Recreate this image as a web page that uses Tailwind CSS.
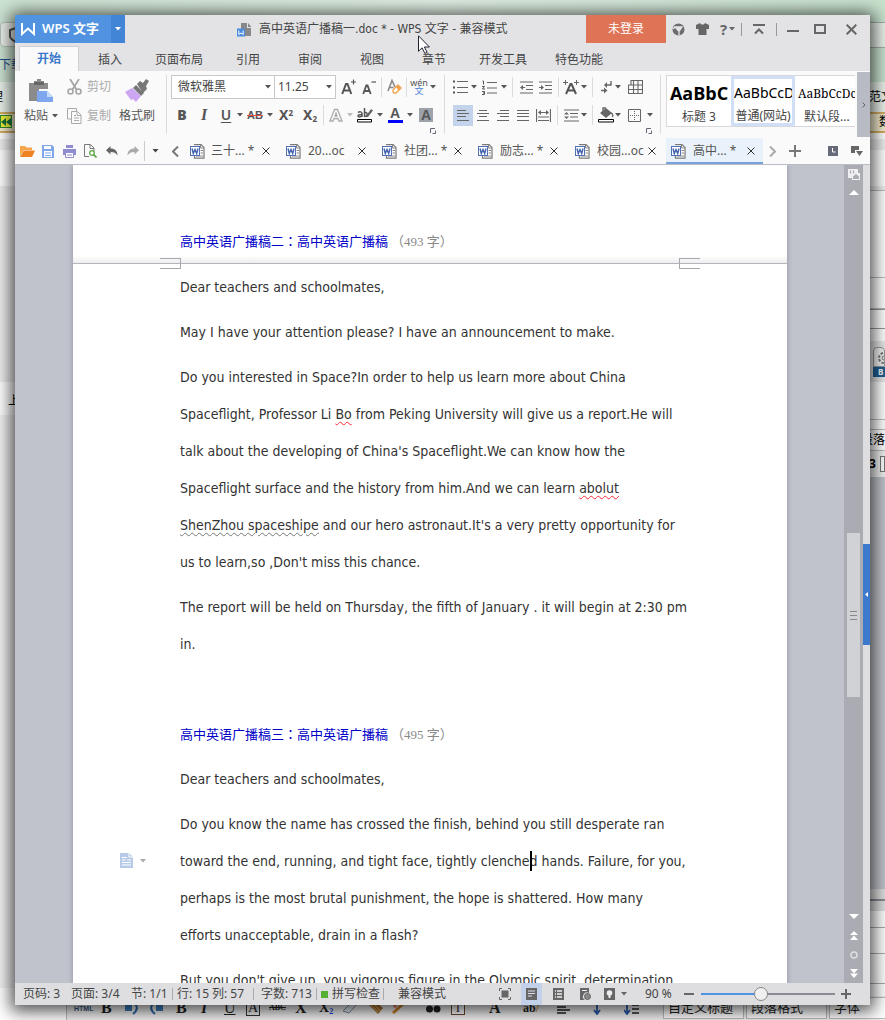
<!DOCTYPE html>
<html lang="zh-CN">
<head>
<meta charset="utf-8">
<title>高中英语广播稿一.doc - WPS 文字</title>
<script src="https://cdn.jsdelivr.net/npm/@tailwindcss/browser@4"></script>
</head>
<body class="h-screen overflow-hidden bg-white font-['Noto_Sans','Noto_Sans_CJK_SC',sans-serif] text-xs text-[#444]">

<svg class="hidden" aria-hidden="true">
  <symbol id="caret" viewBox="0 0 6 4"><path d="M0 0h6L3 3.6z" fill="currentColor"/></symbol>
  <symbol id="doc" viewBox="0 0 15 15"><path d="M4.500 1V.6h6.500l3 3v10.500H4.500V12" fill="#fff" stroke="#7a7a7a" stroke-width="1.200"/><path d="M10.500 1v3h3.500M10.500 6.500H13M10.500 9H13M6 12h7" fill="none" stroke="#888"/><rect x=".5" y="2.500" width="9" height="9" fill="#fff" stroke="#5170b5"/><path d="M2 4.500l1.300 5L5 5.500l1.700 4 1.300-5" fill="none" stroke="#3f61ad" stroke-width="1.400"/></symbol>
  <symbol id="x" viewBox="0 0 8 8"><path d="M.5.5l7 7M7.500.5l-7 7" stroke="#333" fill="none"/></symbol>
  <symbol id="launch" viewBox="0 0 6 6"><path d="M.5 5V.5H5M2.500 5.500h3v-3" fill="none" stroke="#667" stroke-width="1"/></symbol>
</svg>

<div class="relative h-full">
  <!-- Windows behind the editor -->
  <div class="absolute inset-0 overflow-hidden" aria-hidden="true">
    <div class="h-[82px] bg-linear-to-r from-[#cde3d2] via-[#e0eee3] to-[#c8e2ce]"></div>
    <div class="h-[30px] bg-[#e9f1ea]"></div>
    <div class="h-[21px] border-y-2 border-[#d3ae62] bg-[#f4ecd0]"></div>
    <div class="h-[6px] bg-white"></div>
    <div class="h-[11px] bg-[#eee]"></div>
    <div class="absolute left-0 top-[150px] bottom-0 w-[15px]">
      <div class="mt-[36px] h-[196px] bg-[#eee]"></div>
      <div class="mt-[11px] pl-[8px] text-black">上</div>
    </div>
    <div class="absolute left-0 top-[415px] h-[573px] w-[15px] bg-[#f2f2f2]"></div>
    <div class="absolute left-0 top-[22px] flex h-[25px] w-[20px] items-center rounded-sm border border-[#b4c0b6] bg-[#eef2ee] pl-[7px]"><svg class="h-4 w-4 shrink-0" viewBox="0 0 16 16"><path d="M8 1l6 2v6c0 3-4 5-6 6-2-1-6-3-6-6V3z" fill="none" stroke="#555" stroke-width="2"/></svg></div>
    <div class="absolute -left-px top-[57px] whitespace-nowrap text-[#1c4f8c]">下载</div>
    <div class="absolute -left-[9px] top-[89px] text-black">理</div>
    <div class="absolute left-0 top-[115px] flex h-[13px] w-[12px] items-center border border-[#298a36] bg-[#f2f43a]"><svg class="h-[8px] w-[10px]" viewBox="0 0 10 8"><path d="M5 0v8L0 4zM10 0v8L5 4z" fill="#16703a"/></svg></div>

    <div class="absolute right-0 top-[22px] h-[26px] w-[16px] border-y border-[#9fb0a3] bg-[#e9f0ea]"></div>
    <div class="absolute -right-[8px] top-[89px] whitespace-nowrap text-black">范文</div>
    <div class="absolute right-[-6px] top-[114px] whitespace-nowrap text-black">数</div>
    <div class="absolute right-0 top-[150px] w-[16px]">
      <div class="h-[36px] bg-white"></div>
      <div class="h-[4px] bg-[#eee]"></div>
      <div class="h-[88px] border-y border-[#bbb] bg-white"></div>
      <div class="h-[31px] border-b border-[#bbb] bg-white"></div>
      <div class="h-[20px] border-y border-[#999] bg-white"></div>
      <div class="mt-[12px] h-[41px] bg-[#e8e8e8] pt-[6px] pl-[4px]">
        <div class="h-[20px] overflow-hidden rounded-t border border-[#999] bg-[#f2f2f2]"><svg class="h-[18px] w-[18px]" viewBox="0 0 18 18"><circle cx="10" cy="10" r="5" fill="none" stroke="#777" stroke-width="2" stroke-dasharray="2.500 1.400"/><circle cx="10" cy="10" r="2" fill="none" stroke="#777"/></svg></div>
        <div class="h-[10px] bg-[#1f5f92] pl-[5px] text-[8px] leading-[10px] font-bold text-white">B</div>
      </div>
      <div class="mt-[37px] h-[11px] border-y border-[#bbb]"></div>
      <div class="flex h-[20px] justify-end leading-[20px] whitespace-nowrap text-black">段落</div>
      <div class="flex h-[27px] items-center gap-1 border-t border-[#bbb] bg-[#f0f0f0] font-bold text-black">3<span class="h-4 w-4 border border-[#777] bg-white"></span></div>
      <div class="h-[412px] bg-[#c0c3cc]"></div>
      <div class="h-[22px] bg-[#dedee0] pt-[10px]"><div class="h-[2px] bg-[#8a8a92]"></div></div>
      <div class="h-[17px] border-b border-[#aaa] bg-white"></div>
      <div class="h-[26px] border-b border-[#aaa] bg-white"></div>
      <div class="h-[30px] border-b border-[#aaa] bg-white"></div>
    </div>
    <div class="absolute inset-x-0 bottom-0 ml-[66px] flex h-[24px] items-center border-l border-[#bbb] bg-[#f1f1f1] pl-[7px] font-['Liberation_Serif','Noto_Sans_CJK_SC',serif] text-base leading-none text-[#222]">
      <span class="w-[27px] shrink-0 font-['Liberation_Sans',sans-serif] text-[7px] font-bold text-[#345a86]">HTML</span>
      <b class="w-[24px] shrink-0">B</b>
      <svg class="mr-[12px] h-[13px] w-[13px] shrink-0" viewBox="0 0 13 13"><path d="M0 3h7v6H0z" fill="#3f7fc0"/><path d="M9 1c4 3 4 7-1 11" fill="none" stroke="#2b6cb0" stroke-width="2"/></svg>
      <svg class="mr-[13px] h-[13px] w-[13px] shrink-0" viewBox="0 0 13 13"><path d="M6 3h7v6H6z" fill="#3f7fc0"/><path d="M4 1c-4 3-4 7 1 11" fill="none" stroke="#2b6cb0" stroke-width="2"/></svg>
      <b class="w-[25px] shrink-0">B</b><i class="w-[23px] shrink-0 font-bold">I</i><u class="w-[22px] shrink-0">U</u><span class="mr-[9px] w-[14px] shrink-0 border border-[#333] text-center text-sm leading-none">A</span>
      <s class="w-[26px] shrink-0 text-[8px] font-bold">ABC</s><b class="w-[24px] shrink-0">X</b><b class="w-[24px] shrink-0 text-sm">X<sub class="text-[8px] text-blue-700">2</sub></b>
      <svg class="mr-[10px] h-[12px] w-[15px] shrink-0" viewBox="0 0 15 12"><path d="M0 9l9-9 5 2-8 9z" fill="#e4eaf2" stroke="#7d8ca3"/></svg>
      <svg class="mr-[9px] h-[12px] w-[15px] shrink-0" viewBox="0 0 15 12"><path d="M0 2l8-2 7 6-5 6z" fill="#a8722f"/><path d="M3 3l7 7M6 2l6 7" stroke="#e2b36a"/></svg>
      <svg class="mr-[20px] h-[12px] w-[14px] shrink-0" viewBox="0 0 14 12"><path d="M1 11L12 1" stroke="#d0852c" stroke-width="3"/><path d="M3 2v4M1 4h4" stroke="#e05a30"/></svg>
      <svg class="mr-[10px] h-[10px] w-[15px] shrink-0" viewBox="0 0 15 10"><circle cx="3.500" cy="6" r="3.500" fill="#222"/><circle cx="11" cy="6" r="3.500" fill="#222"/></svg>
      <span class="mr-[24px] w-[14px] shrink-0 border border-[#6a4a30] bg-white text-center text-xs leading-none">T</span>
      <b class="w-[34px] shrink-0">A</b><span class="w-[34px] shrink-0 text-xs font-bold">ab<span class="text-[#c98324]">/</span></span>
      <svg class="mr-[22px] h-[11px] w-[13px] shrink-0" viewBox="0 0 13 11"><path d="M0 1h13M0 4h9M0 7h13M0 10h9" stroke="#222" stroke-width="1.500"/></svg>
      <svg class="mr-[22px] h-[13px] w-[10px] shrink-0" viewBox="0 0 10 13"><path d="M0 1h10M5 2v9M2 8l3 4 3-4" fill="none" stroke="#2b5cb0" stroke-width="1.800"/></svg>
      <svg class="mr-[24px] h-[13px] w-[15px] shrink-0" viewBox="0 0 15 13"><path d="M3 1v10M0 8l3 4 3-4" fill="none" stroke="#2b5cb0" stroke-width="1.800"/><path d="M8 3h7M8 7h7M8 11h7" stroke="#222" stroke-width="1.500"/></svg>
      <div class="ml-auto flex shrink-0 gap-[2px] text-[13px] leading-5 whitespace-nowrap">
        <span class="w-[81px] border border-[#bbb] bg-white pl-1">自定义标题</span>
        <span class="w-[81px] border border-[#bbb] bg-white pl-1">段落格式</span>
        <span class="w-[66px] border border-r-0 border-[#bbb] bg-white pl-1">字体</span>
      </div>
    </div>
  </div>

  <div class="relative h-full p-[15px]">
  <div class="flex h-full flex-col bg-[#e3e3e6] shadow-[0_2px_16px_4px_rgba(0,0,0,0.7)]">

    <!-- Title bar -->
    <header class="flex h-[28px] shrink-0 items-center">
      <button class="flex h-full w-[96px] items-center gap-[7px] bg-[#5193e1] pl-[6px] text-[13px] font-semibold whitespace-nowrap text-white">
        <svg class="h-[14px] w-[14px] shrink-0" viewBox="0 0 14 14"><path d="M1 1v11l6-5.500 6 5.500V1" fill="none" stroke="#fff" stroke-width="2"/></svg>WPS 文字</button>
      <button class="flex h-full w-[14px] items-center justify-center bg-[#4284d6] text-white" aria-label="应用菜单"><svg class="h-[4px] w-[6px]"><use href="#caret"/></svg></button>
      <h1 class="ml-[112px] flex items-center gap-[7px] font-['DejaVu_Sans_Condensed','Noto_Sans_CJK_SC',sans-serif] whitespace-nowrap text-[#444]">
        <svg class="h-[15px] w-[15px]" viewBox="0 0 15 15"><path d="M4 1h6v5h4v8H4z" fill="#888"/><path d="M11 1l3.500 4H11z" fill="#888"/><rect y="6.500" width="8" height="8" fill="#4a8be0"/><path d="M1.800 8.500v4L4 11l2.200 1.500v-4" fill="none" stroke="#fff"/></svg>
        高中英语广播稿一.doc * - WPS 文字 - 兼容模式</h1>
      <div class="ml-auto flex h-full items-center text-[#666]">
        <button class="h-full w-[80px] bg-[#df7356] text-white">未登录</button>
        <button class="flex w-[24px] justify-center" aria-label="皮肤中心"><svg class="h-[13px] w-[13px]" viewBox="0 0 13 13"><circle cx="6.500" cy="6.500" r="6" fill="#6c6c6c"/><path d="M3 4h7L7 8.500zM7 8v4.500M3 4L1 6" fill="#e3e3e6" stroke="#e3e3e6" stroke-width="1.300"/></svg></button>
        <button class="flex w-[24px] justify-center" aria-label="换肤"><svg class="h-[12px] w-[13px]" viewBox="0 0 13 12"><path d="M0 2l4-2c1 2 4 2 5 0l4 2v4h-2.500v6h-8V6H0z" fill="#666"/></svg></button>
        <button class="flex w-[27px] items-center justify-center gap-[2px]" aria-label="帮助"><b class="text-[15px] leading-none">?</b><svg class="h-[4px] w-[6px]"><use href="#caret"/></svg></button>
        <span class="h-[13px] w-px bg-[#999]"></span>
        <button class="flex w-[34px] justify-center" aria-label="收起功能区"><svg class="h-[11px] w-[12px]" viewBox="0 0 12 11"><path d="M0 1h12M2 9.500l4-4 4 4" fill="none" stroke="#666" stroke-width="2"/></svg></button>
        <span class="h-[13px] w-px bg-[#999]"></span>
        <button class="flex w-[32px] justify-center" aria-label="最小化"><svg class="h-[11px] w-[12px]" viewBox="0 0 12 11"><path d="M0 7h12" stroke="#666" stroke-width="2"/></svg></button>
        <button class="flex w-[22px] justify-center" aria-label="最大化"><svg class="h-[10px] w-[12px]" viewBox="0 0 12 10"><path d="M1 1h10v8H1z" fill="none" stroke="#666" stroke-width="2"/></svg></button>
        <button class="flex w-[39px] justify-center pl-px" aria-label="关闭"><svg class="h-[11px] w-[11px]" viewBox="0 0 11 11"><path d="M.7.7l9.600 9.600M10.300.7L.7 10.300" stroke="#666" stroke-width="2"/></svg></button>
      </div>
    </header>

    <!-- Ribbon tabs -->
    <nav class="flex h-[28px] shrink-0 items-end pl-[4px]">
      <a href="#" class="flex h-[25px] w-[60px] items-center justify-center border border-b-0 border-[#d0d0d4] bg-[#fafafa] font-bold text-[#3a78cc]">开始</a>
      <a href="#" class="w-[62px] pb-[3px] text-center">插入</a>
      <a href="#" class="w-[76px] pb-[3px] text-center">页面布局</a>
      <a href="#" class="w-[62px] pb-[3px] text-center">引用</a>
      <a href="#" class="w-[62px] pb-[3px] text-center">审阅</a>
      <a href="#" class="w-[62px] pb-[3px] text-center">视图</a>
      <a href="#" class="w-[62px] pb-[3px] text-center">章节</a>
      <a href="#" class="w-[76px] pb-[3px] text-center">开发工具</a>
      <a href="#" class="w-[76px] pb-[3px] text-center">特色功能</a>
    </nav>

    <!-- Ribbon -->
    <section class="flex h-[66px] shrink-0 bg-[#fafafa] text-[#555]">
      <div class="flex w-[151px] shrink-0 pt-[5px]">
        <button class="flex w-[52px] flex-col items-center gap-[4px] pt-[3px]"><svg class="h-[24px] w-[24px]" viewBox="0 0 24 24"><path d="M0 4h5V2h3V0h4v2h3v2h4v6h-9v12H0z" fill="#8b8b8b"/><path d="M5 3h10v3H5z" fill="#666"/><path d="M8 12h10l6 6v5H8z" fill="#7ea7ee"/><path d="M18 12v6h6z" fill="#c6daf9"/></svg><span class="flex items-center gap-1 leading-[18px]">粘贴<svg class="h-[4px] w-[6px]"><use href="#caret"/></svg></span></button>
        <div class="flex flex-col gap-[7px] text-[#aaa]">
          <button class="flex h-[22px] items-center gap-[5px]"><svg class="h-[16px] w-[15px]" viewBox="0 0 15 16"><path d="M3 0l6.500 10.500M12 0L5.500 10.500" stroke="#a5a5a5" stroke-width="1.800"/><circle cx="3.500" cy="12.500" r="2.500" fill="none" stroke="#a5a5a5" stroke-width="1.600"/><circle cx="11.500" cy="12.500" r="2.500" fill="none" stroke="#a5a5a5" stroke-width="1.600"/></svg>剪切</button>
          <button class="flex h-[22px] items-center gap-[5px]"><svg class="h-[16px] w-[15px]" viewBox="0 0 15 16"><path d="M4 11H.5V.5h9V3M4.500 3.500h6l3.500 3.500v8.500H4.500zM10 4v3.500h4M7 7.500h2M7 10h5M7 12.500h5" fill="none" stroke="#aaa"/></svg>复制</button>
        </div>
        <button class="flex w-[52px] flex-col items-center gap-[4px] pt-[2px]"><svg class="h-[25px] w-[24px]" viewBox="0 0 24 25"><path d="M12 6l3-3 3 2 3-4 3 2-3 5 1 3-4 4z" fill="#777"/><path d="M11 7l8 8-3 3-8-8z" fill="#777"/><path d="M7 10l9 8-5 6-3-3-2 1-6-8z" fill="#cda6f3"/></svg><span class="leading-[18px]">格式刷</span></button>
      </div>
      <div class="mt-[4px] h-[59px] w-px shrink-0 bg-[#dcdcdf]"></div>

      <!-- Font -->
      <div class="w-[277px] shrink-0 pt-[4px] pl-[4px]">
        <div class="flex h-[24px] items-center">
          <div class="flex h-[24px] w-[165px] items-center border border-[#c8c8cc] bg-white">
            <label class="relative flex h-full w-[103px] items-center border-r border-[#c8c8cc]"><span class="sr-only">字体</span><select class="w-full appearance-none pl-[6px] text-[#444]"><option>微软雅黑</option></select><svg class="pointer-events-none absolute right-[3px] h-[4px] w-[6px]"><use href="#caret"/></svg></label>
            <label class="relative flex h-full flex-1 items-center"><span class="sr-only">字号</span><select class="w-full appearance-none pl-[3px] text-xs text-[#444]"><option>11.25</option></select><svg class="pointer-events-none absolute right-[3px] h-[4px] w-[6px]"><use href="#caret"/></svg></label>
          </div>
          <button class="flex w-[24px] justify-center" aria-label="增大字号"><svg class="h-[16px] w-[15px]" viewBox="0 0 15 16"><path d="M1.200 15L5 5h1.500l3.800 10M3 11.500h5.500" fill="none" stroke="#555" stroke-width="2"/><path d="M10 3h5M12.500.5v5" stroke="#555" stroke-width="1.200"/></svg></button>
          <button class="flex w-[18px] justify-center" aria-label="减小字号"><svg class="h-[16px] w-[14px]" viewBox="0 0 14 16"><path d="M1.200 15L4.300 6.500h1.200L8.700 15M3 12h4" fill="none" stroke="#555" stroke-width="1.800"/><path d="M9.500 3H14" stroke="#555" stroke-width="1.200"/></svg></button>
          <span class="flex h-[20px] w-[6px] justify-center"><i class="w-px bg-[#dcdcdf]"></i></span>
          <button class="flex w-[20px] justify-center" aria-label="清除格式"><svg class="h-[16px] w-[15px]" viewBox="0 0 15 16"><path d="M1 12L5 1.500 8 8M2.500 8.500h4" fill="none" stroke="#8a8a8a" stroke-width="1.600"/><path d="M6 11l5-5 3 3-5 5H7l-1-1z" fill="#fff" stroke="#f0a24a" stroke-width="1.300"/><path d="M9 8l2-2 3 3-2.500 2.500z" fill="#f0a24a"/></svg></button>
          <span class="flex h-[20px] w-[4px] justify-center"><i class="w-px bg-[#dcdcdf]"></i></span>
          <button class="w-[22px] text-center text-[9px] leading-[8px]" aria-label="拼音指南">wén<br><span class="text-[#4a86d8]">文</span></button>
          <svg class="h-[4px] w-[6px]"><use href="#caret"/></svg>
        </div>
        <div class="mt-[5px] flex h-[22px] items-center font-['Liberation_Sans',sans-serif]">
          <button class="w-[22px] font-['Noto_Sans'] text-[14px] font-black" aria-label="加粗">B</button>
          <button class="w-[22px] font-['Liberation_Serif'] text-[16px] font-bold italic" aria-label="倾斜">I</button>
          <button class="w-[22px] font-['Noto_Sans'] text-[14px] font-semibold underline underline-offset-2" aria-label="下划线">U</button>
          <svg class="h-[4px] w-[6px]"><use href="#caret"/></svg>
          <button class="w-[24px] text-[11px] font-bold" aria-label="删除线"><s class="decoration-[#e84a4a]">AB</s></button>
          <svg class="h-[4px] w-[6px]"><use href="#caret"/></svg>
          <button class="w-[26px] font-['Noto_Sans'] text-[14px] leading-none font-bold" aria-label="上标">X<sup class="text-[8px]">2</sup></button>
          <button class="w-[22px] font-['Noto_Sans'] text-[14px] leading-none font-bold" aria-label="下标">X<sub class="text-[8px]">2</sub></button>
          <span class="flex h-[20px] w-[4px] justify-center"><i class="w-px bg-[#dcdcdf]"></i></span>
          <button class="flex w-[22px] justify-center" aria-label="文字效果"><svg class="h-[15px] w-[14px]" viewBox="0 0 14 15"><path d="M1 13L5.500 1.500h3L13 13h-3l-1-2.500H5L4 13zM6 8h2L7 5z" fill="#fff" stroke="#aaa" stroke-width="1.300"/></svg></button>
          <svg class="h-[4px] w-[6px] text-[#bbb]"><use href="#caret"/></svg>
          <button class="flex w-[24px] justify-center" aria-label="突出显示"><svg class="h-[16px] w-[16px]" viewBox="0 0 16 16"><path d="M1 5.500c2-1.500 4-.5 4 1V10M5 7.500c-3 0-4 .5-4 1.500s3 1.500 4-.5M7.500 1v9M7.500 6c3-2 4 3.500 0 3.500" fill="none" stroke="#555" stroke-width="1.500"/><path d="M9 9l5-7 2 1.500L11 10H8z" fill="#666"/><path d="M.5 12.500h14v2.500H.5z" fill="#fff" stroke="#000"/></svg></button>
          <svg class="h-[4px] w-[6px]"><use href="#caret"/></svg>
          <button class="flex w-[24px] justify-center" aria-label="字体颜色"><span class="w-[15px] border-b-[3px] border-[#00f] text-[14px] leading-[13px] font-bold">A</span></button>
          <svg class="h-[4px] w-[6px]"><use href="#caret"/></svg>
          <button class="flex w-[26px] justify-center" aria-label="字符底纹"><span class="h-[14px] w-[14px] bg-[#9ea3ab] text-[14px] leading-[14px] font-bold">A</span></button>
        </div>
        <div class="flex justify-end pt-[2px] pr-[8px]"><svg class="h-[6px] w-[6px]"><use href="#launch"/></svg></div>
      </div>
      <div class="mt-[4px] h-[59px] w-px shrink-0 bg-[#dcdcdf]"></div>

      <!-- Paragraph -->
      <div class="w-[215px] shrink-0 pt-[4px] pl-[4px]">
        <div class="flex h-[24px] items-center">
          <button class="flex w-[22px] justify-center" aria-label="项目符号"><svg class="h-[14px] w-[15px]" viewBox="0 0 15 14"><path d="M4 1.500h11M4 7.500h11M4 12.500h11" stroke="#666" stroke-width="1.200"/><path d="M0 .5h2v2H0zM0 6.500h2v2H0zM0 11.500h2v2H0z" fill="#555"/></svg></button>
          <svg class="h-[4px] w-[6px]"><use href="#caret"/></svg>
          <button class="flex w-[24px] justify-center" aria-label="编号"><svg class="h-[15px] w-[15px]" viewBox="0 0 15 15"><path d="M5 2.500h10M5 8h10M5 13h10" stroke="#666" stroke-width="1.200"/><path d="M.5 1h1v3.500M0 6.500h2.500L.5 9h2.500M0 11.500h2.500v3H0M1 13h1.500" fill="none" stroke="#555"/></svg></button>
          <svg class="h-[4px] w-[6px]"><use href="#caret"/></svg>
          <span class="flex h-[20px] w-[10px] justify-center"><i class="w-px bg-[#dcdcdf]"></i></span>
          <button class="flex w-[18px] justify-center" aria-label="减少缩进"><svg class="h-[13px] w-[13px]" viewBox="0 0 13 13"><path d="M0 1h13M6 4.500h7M6 8.500h7M0 12h13M1 6.500h4" stroke="#666" stroke-width="1.200"/><path d="M3 4L0 6.500 3 9z" fill="#666"/></svg></button>
          <button class="flex w-[20px] justify-center" aria-label="增加缩进"><svg class="h-[13px] w-[13px]" viewBox="0 0 13 13"><path d="M0 1h13M6 4.500h7M6 8.500h7M0 12h13M0 6.500h4" stroke="#666" stroke-width="1.200"/><path d="M2 4l3 2.500L2 9z" fill="#666"/></svg></button>
          <span class="flex h-[20px] w-[6px] justify-center"><i class="w-px bg-[#dcdcdf]"></i></span>
          <button class="flex w-[20px] justify-center" aria-label="中文版式"><svg class="h-[15px] w-[16px]" viewBox="0 0 16 15"><path d="M3 14L7.500 4h1L13 14M5 10.500h6" fill="none" stroke="#555" stroke-width="2"/><path d="M0 2.500h5M2.500 0v5M11 2.500h5M13.500 0v5" stroke="#666"/></svg></button>
          <svg class="h-[4px] w-[6px]"><use href="#caret"/></svg>
          <span class="flex h-[20px] w-[10px] justify-center"><i class="w-px bg-[#dcdcdf]"></i></span>
          <button class="flex w-[18px] justify-center" aria-label="显示段落标记"><svg class="h-[13px] w-[11px]" viewBox="0 0 11 13"><path d="M10 0v4H5M0 9.500h4" fill="none" stroke="#666" stroke-width="1.400"/><path d="M6 1v6L3 4zM3 6.500v6l3.500-3z" fill="#666"/></svg></button>
          <svg class="h-[4px] w-[6px]"><use href="#caret"/></svg>
          <button class="flex w-[28px] justify-center" aria-label="插入表格"><svg class="h-[14px] w-[15px]" viewBox="0 0 15 14"><path d="M3 .5h11.500v13H.5V5H14M1 9.500h14M5.500 0v14M10 0v14M3 0v5" fill="none" stroke="#666" stroke-width="1.100"/></svg></button>
        </div>
        <div class="mt-[5px] flex h-[22px] items-center pl-[4px]">
          <button class="flex h-[21px] w-[20px] items-center justify-center bg-[#c4d3ec]" aria-label="左对齐"><svg class="h-[13px] w-[12px]" viewBox="0 0 12 13"><path d="M0 1.500h9M0 4.500h12M0 7.500h9M0 11.500h12" stroke="#666" stroke-width="1.200"/></svg></button>
          <button class="flex w-[20px] justify-center" aria-label="居中"><svg class="h-[13px] w-[12px]" viewBox="0 0 12 13"><path d="M2 1.500h8M0 4.500h12M2 7.500h8M0 11.500h12" stroke="#666" stroke-width="1.200"/></svg></button>
          <button class="flex w-[20px] justify-center" aria-label="右对齐"><svg class="h-[13px] w-[12px]" viewBox="0 0 12 13"><path d="M3 1.500h9M0 4.500h12M3 7.500h9M0 11.500h12" stroke="#666" stroke-width="1.200"/></svg></button>
          <button class="flex w-[20px] justify-center" aria-label="两端对齐"><svg class="h-[13px] w-[12px]" viewBox="0 0 12 13"><path d="M0 1.500h12M0 4.500h12M0 7.500h12M0 11.500h12" stroke="#666" stroke-width="1.200"/></svg></button>
          <button class="flex w-[20px] justify-center" aria-label="分散对齐"><svg class="h-[13px] w-[15px]" viewBox="0 0 15 13"><path d="M.5 0v13M14.500 0v13M3 3.500h9M2 8h11M2 11.500h11" stroke="#666" stroke-width="1.200"/><path d="M5 1L2 3.500 5 6zM10 1l3 2.500L10 6z" fill="#666"/></svg></button>
          <span class="flex h-[20px] w-[8px] justify-center"><i class="w-px bg-[#dcdcdf]"></i></span>
          <button class="flex w-[20px] justify-center" aria-label="行距"><svg class="h-[13px] w-[15px]" viewBox="0 0 15 13"><path d="M0 1h15M6 4.500h8M6 8h8M0 12h15" stroke="#666" stroke-width="1.200"/><path d="M0 5.500L2.500 3 5 5.500zM0 7.500L2.500 10 5 7.500z" fill="#666"/></svg></button>
          <svg class="h-[4px] w-[6px]"><use href="#caret"/></svg>
          <span class="flex h-[20px] w-[10px] justify-center"><i class="w-px bg-[#dcdcdf]"></i></span>
          <button class="flex w-[18px] justify-center" aria-label="底纹颜色"><svg class="h-[16px] w-[16px]" viewBox="0 0 16 16"><path d="M2 6l6-5 6 5-6 5z" fill="#666"/><path d="M5 6V1h3M12 6c3 0 3 2 2.500 4" fill="none" stroke="#666" stroke-width="1.400"/><path d="M.5 12.500h15v2.500H.5z" fill="#fff" stroke="#000"/></svg></button>
          <svg class="h-[4px] w-[6px]"><use href="#caret"/></svg>
          <button class="flex w-[26px] justify-center" aria-label="边框"><svg class="h-[13px] w-[13px]" viewBox="0 0 13 13"><path d="M.5.500h12v12H.5z" fill="none" stroke="#666"/><path d="M6.500 2v9M2 6.500h9" stroke="#666" stroke-dasharray="1 1"/></svg></button>
          <svg class="h-[4px] w-[6px]"><use href="#caret"/></svg>
        </div>
        <div class="flex justify-end pt-[2px] pr-[8px]"><svg class="h-[6px] w-[6px]"><use href="#launch"/></svg></div>
      </div>
      <div class="mt-[4px] h-[59px] w-px shrink-0 bg-[#dcdcdf]"></div>

      <!-- Styles gallery -->
      <div class="mt-[4px] ml-[5px] flex h-[52px] min-w-0 flex-1 overflow-hidden border border-r-0 border-[#d8d8dc] bg-white whitespace-nowrap text-[#444]">
        <button class="w-[64px] shrink-0 overflow-hidden"><span class="block h-[31px] font-['Open_Sans'] text-[18px] leading-[33px] font-bold text-black">AaBbC</span><span class="block leading-[18px]">标题 3</span></button>
        <button class="w-[64px] shrink-0 overflow-hidden border-[3px] border-[#d0dff5]"><span class="block h-[28px] text-left text-[14px] leading-[27px] text-black">AaBbCcD</span><span class="block leading-[18px]">普通(网站)</span></button>
        <button class="w-[64px] shrink-0 overflow-hidden pl-[3px] text-left"><span class="block h-[31px] font-['Noto_Serif','DejaVu_Serif',serif] text-[12px] leading-[33px] text-black">AaBbCcDc</span><span class="block pl-[6px] leading-[18px]">默认段...</span></button>
      </div>
      <button class="mt-px ml-[2px] flex w-[13px] shrink-0 items-center justify-center bg-[#b8bac4]" aria-label="更多"><svg class="h-[6px] w-[4px]" viewBox="0 0 4 6"><path d="M.5.500L3 3 .5 5.500" fill="none" stroke="#666"/></svg></button>
    </section>

    <!-- Quick access and document tabs -->
    <section class="flex h-[28px] shrink-0 items-center border-b border-[#b9bbc6] bg-[#fafafa] pt-px pl-[2px]">
      <button class="flex w-[20px] justify-center" aria-label="打开"><svg class="h-[12px] w-[15px]" viewBox="0 0 15 12"><path d="M0 11V1h5l1.500 1.500H12V5H4z" fill="#f5a54c"/><path d="M4 5.500h11L12 12H0z" fill="#f08122"/></svg></button>
      <button class="flex w-[22px] justify-center" aria-label="保存"><svg class="h-[13px] w-[12px]" viewBox="0 0 12 13"><path d="M0 0h10l2 2v11H0z" fill="#7fa5ea"/><path d="M2 1h7v3H2zM2 6h8v6H2z" fill="#fff"/><path d="M3 8h6M3 10.500h6" stroke="#7fa5ea"/></svg></button>
      <button class="flex w-[20px] justify-center" aria-label="打印"><svg class="h-[13px] w-[13px]" viewBox="0 0 13 13"><path d="M3 0h7v3H3zM0 4h13v6H0z" fill="#8f8cd0"/><path d="M2.500 7.500h8v5h-8z" fill="#fff" stroke="#8f8cd0"/><path d="M4 10h5" stroke="#8f8cd0"/></svg></button>
      <button class="flex w-[22px] justify-center" aria-label="打印预览"><svg class="h-[14px] w-[13px]" viewBox="0 0 13 14"><path d="M5 12.500H.5V.5h6L10 4v3M6 1v3.500h4" fill="none" stroke="#777"/><circle cx="8" cy="9" r="2.300" fill="#fff" stroke="#5aa545" stroke-width="1.300"/><path d="M9.500 10.500L12.500 13.500" stroke="#5aa545" stroke-width="1.600"/></svg></button>
      <button class="flex w-[21px] justify-center" aria-label="撤销"><svg class="h-[10px] w-[12px]" viewBox="0 0 12 10"><path d="M4.500 0v2.500C9 2.500 11.500 5 11.500 9.500 10 7 8 6 4.500 6v2.500L0 4.200z" fill="#666"/></svg></button>
      <button class="flex w-[21px] justify-center" aria-label="恢复"><svg class="h-[10px] w-[12px]" viewBox="0 0 12 10"><path d="M7.500 0v2.500C3 2.500.5 5 .5 9.500 2 7 4 6 7.500 6v2.500L12 4.200z" fill="#aaa"/></svg></button>
      <span class="ml-px h-[20px] w-px bg-[#ccc]"></span>
      <button class="flex w-[20px] justify-center text-[#444]" aria-label="自定义快速访问"><svg class="h-[4px] w-[7px]"><use href="#caret"/></svg></button>
      <button class="flex w-[20px] justify-center" aria-label="上一个标签"><svg class="h-[11px] w-[7px]" viewBox="0 0 7 11"><path d="M6 .5l-5 5 5 5" fill="none" stroke="#777" stroke-width="2"/></svg></button>
      <div class="flex h-full text-[#555]">
        <div class="flex w-[97px] items-center pl-[5px]"><svg class="h-[15px] w-[15px]"><use href="#doc"/></svg><a href="#" class="ml-[6px] flex-1 whitespace-nowrap">三十... *</a><button class="mr-[12px]" aria-label="关闭标签"><svg class="h-[8px] w-[8px]"><use href="#x"/></svg></button></div>
        <div class="flex w-[96px] items-center pl-[4px]"><svg class="h-[15px] w-[15px]"><use href="#doc"/></svg><a href="#" class="ml-[7px] flex-1 whitespace-nowrap">20...oc</a><button class="mr-[12px]" aria-label="关闭标签"><svg class="h-[8px] w-[8px]"><use href="#x"/></svg></button></div>
        <div class="flex w-[96px] items-center pl-[4px]"><svg class="h-[15px] w-[15px]"><use href="#doc"/></svg><a href="#" class="ml-[7px] flex-1 whitespace-nowrap">社团... *</a><button class="mr-[12px]" aria-label="关闭标签"><svg class="h-[8px] w-[8px]"><use href="#x"/></svg></button></div>
        <div class="flex w-[96px] items-center pl-[4px]"><svg class="h-[15px] w-[15px]"><use href="#doc"/></svg><a href="#" class="ml-[7px] flex-1 whitespace-nowrap">励志... *</a><button class="mr-[12px]" aria-label="关闭标签"><svg class="h-[8px] w-[8px]"><use href="#x"/></svg></button></div>
        <div class="flex w-[96px] items-center pl-[5px]"><svg class="h-[15px] w-[15px]"><use href="#doc"/></svg><a href="#" class="ml-[7px] flex-1 whitespace-nowrap">校园...oc</a><button class="mr-[10px]" aria-label="关闭标签"><svg class="h-[8px] w-[8px]"><use href="#x"/></svg></button></div>
        <div class="flex w-[97px] items-center bg-[#e9f2fb] pl-[5px] shadow-[inset_0_-2px_0_#78a3d9]"><svg class="h-[15px] w-[15px]"><use href="#doc"/></svg><a href="#" class="ml-[7px] flex-1 whitespace-nowrap">高中... *</a><button class="mr-[8px]" aria-label="关闭标签"><svg class="h-[8px] w-[8px]"><use href="#x"/></svg></button></div>
      </div>
      <button class="flex w-[18px] justify-center" aria-label="下一个标签"><svg class="h-[11px] w-[7px]" viewBox="0 0 7 11"><path d="M1 .5l5 5-5 5" fill="none" stroke="#aaa" stroke-width="2"/></svg></button>
      <button class="flex w-[28px] justify-center" aria-label="新建"><svg class="h-[12px] w-[12px]" viewBox="0 0 12 12"><path d="M6 0v12M0 6h12" stroke="#777" stroke-width="2"/></svg></button>
      <button class="mr-[13px] ml-auto" aria-label="历史"><svg class="h-[10px] w-[10px]" viewBox="0 0 10 10"><path d="M0 0h10v10H0z" fill="#676a78"/><path d="M4.500 2v4H7.500" fill="none" stroke="#fff"/></svg></button>
      <button class="mr-[7px]" aria-label="窗口列表"><svg class="h-[10px] w-[12px]" viewBox="0 0 12 10"><path d="M0 0h8v4H4v3H0zM5 5h7L8.500 10z" fill="#666"/></svg></button>
    </section>

    <!-- Document area -->
    <main class="flex min-h-0 flex-1 bg-[#c0c3cc]">
      <div class="relative min-w-0 flex-1 overflow-hidden pr-[57px] pl-[58px]">
        <div class="bg-white font-['DejaVu_Sans_Condensed','Noto_Sans_CJK_SC',sans-serif] text-[14px] whitespace-nowrap text-[#333] shadow-[0_0_5px_rgba(120,120,140,0.7)]">
          <div class="h-[99px] border-b border-[#b4b4bc] bg-linear-to-b from-white from-92% to-[#eee] px-[107px] pt-[57px] text-[13px] leading-[37px] text-[#0000c8]">
            <h2>高中英语广播稿二<span class="font-['Noto_Sans_CJK_TC']" lang="zh-TW">：</span>高中英语广播稿<span class="ml-[3px] font-['Liberation_Serif','Noto_Sans_CJK_SC'] text-[#888]">（493 字）</span></h2>
          </div>
          <div class="h-[900px] px-[107px] pt-[5px] leading-[37px]">
            <p class="mb-2">Dear teachers and schoolmates,</p>
            <p class="mb-2">May I have your attention please? I have an announcement to make.</p>
            <p class="mb-2">Do you interested in Space?In order to help us learn more about China<br>
            Spaceflight, Professor Li <span class="underline decoration-red-500 decoration-wavy decoration-1 underline-offset-2">Bo</span> from Peking University will give us a report.He will<br>
            talk about the developing of China's Spaceflight.We can know how the<br>
            Spaceflight surface and the history from him.And we can learn <span class="underline decoration-red-500 decoration-wavy decoration-1 underline-offset-2">abolut</span><br>
            <span class="underline decoration-[#777] decoration-wavy decoration-1 underline-offset-2">ShenZhou spaceshipe</span> and our hero astronaut.It's a very pretty opportunity for<br>
            us to learn,so ,Don't miss this chance.</p>
            <p class="mb-[52px]">The report will be held on Thursday, the fifth of January . it will begin at 2:30 pm<br>in.</p>
            <h2 class="mb-2 text-[13px] text-[#0000c8]">高中英语广播稿三<span class="font-['Noto_Sans_CJK_TC']" lang="zh-TW">：</span>高中英语广播稿<span class="ml-[3px] font-['Liberation_Serif','Noto_Sans_CJK_SC'] text-[#888]">（495 字）</span></h2>
            <p class="mb-2">Dear teachers and schoolmates,</p>
            <p class="mb-2">Do you know the name has crossed the finish, behind you still desperate ran<br>
            toward the end, running, and tight face, tightly clenche<span class="relative">d<i class="absolute top-[-2px] left-0 h-[20px] w-[2px] bg-black"></i></span> hands. Failure, for you,<br>
            perhaps is the most brutal punishment, the hope is shattered. How many<br>
            efforts unacceptable, drain in a flash?</p>
            <p>But you don't give up, you vigorous figure in the Olympic spirit, determination</p>
          </div>
        </div>
        <!-- Margin marks over the page break -->
        <div class="absolute top-[93px] left-[145px] h-[11px] w-[21px] border border-l-0 border-[#a8a8ac]"></div>
        <div class="absolute top-[93px] right-[144px] h-[11px] w-[21px] border border-r-0 border-[#a8a8ac]"></div>
        <button class="absolute top-[688px] left-[105px] flex items-center gap-[7px] text-[#aaa]" aria-label="段落布局"><svg class="h-[15px] w-[13px]" viewBox="0 0 13 15"><path d="M0 0h9l4 4v11H0z" fill="#b7cbe9"/><path d="M2 4.500h5M2 7h3.500M7 7h4M2 9.500h9M2 12h9M9 0v4h4" fill="none" stroke="#fff"/></svg><svg class="h-[4px] w-[6px]"><use href="#caret"/></svg></button>
      </div>
      <!-- Vertical scrollbar -->
      <div class="flex w-[19px] shrink-0 flex-col items-center bg-[#ababb3] pt-[4px] pb-[5px]">
        <svg class="h-[11px] w-[12px]" viewBox="0 0 12 11"><path d="M0 0h10v4h2v7H4V9H0z" fill="#f0f0f2"/><path d="M2.500 1.500v3M5.500 1.500v3" stroke="#ababb3" stroke-width="1.200"/><path d="M5 10V7.500L8 5l3 2.500V10z" fill="#ababb3"/></svg>
        <svg class="mt-[10px] h-[5px] w-[10px]" viewBox="0 0 10 5"><path d="M0 5h10L5 0z" fill="#fff"/></svg>
        <div class="mt-[338px] flex h-[164px] w-[13px] flex-col items-center justify-center gap-[3px] bg-[#d1d2d6]"><i class="h-px w-[7px] bg-[#888]"></i><i class="h-px w-[7px] bg-[#888]"></i><i class="h-px w-[7px] bg-[#888]"></i></div>
        <svg class="mt-auto h-[5px] w-[10px]" viewBox="0 0 10 5"><path d="M0 0h10L5 5z" fill="#fff"/></svg>
        <svg class="mt-[12px] h-[9px] w-[8px]" viewBox="0 0 8 9"><path d="M4 0L0 4h8zM4 4.500L0 9h8z" fill="#fff"/></svg>
        <svg class="mt-[11px] h-[8px] w-[8px]" viewBox="0 0 8 8"><circle cx="4" cy="4" r="3" fill="none" stroke="#dedee2" stroke-width="1.500"/></svg>
        <svg class="mt-[10px] h-[9px] w-[8px]" viewBox="0 0 8 9"><path d="M4 4.500L0 0h8zM4 9L0 4.500h8z" fill="#fff"/></svg>
      </div>
      <div class="w-[7px] shrink-0 bg-[#dedee0] pt-[379px]">
        <button class="flex h-[101px] w-full items-center justify-center bg-[#3d7acd]" aria-label="展开任务窗格"><svg class="h-[5px] w-[3px]" viewBox="0 0 3 5"><path d="M3 0v5L0 2.500z" fill="#fff"/></svg></button>
      </div>
    </main>

    <!-- Status bar -->
    <footer class="flex h-[22px] shrink-0 items-center bg-[#dedee0] pl-[8px] whitespace-nowrap text-[#444]">
      <span class="w-[48px]">页码: 3</span>
      <span class="w-[60px]">页面: 3/4</span>
      <span class="w-[41px]">节: 1/1</span>
      <span class="w-[40px] border-l border-[#aaa] pl-[4px] leading-[12px]">行: 15</span>
      <span class="w-[41px] leading-[12px]">列: 57</span>
      <span class="w-[63px] border-l border-[#aaa] pl-[7px] leading-[12px]">字数: 713</span>
      <span class="flex w-[68px] items-center gap-[4px] border-x border-[#aaa] pl-[4px] leading-[12px]"><i class="h-[7px] w-[7px] bg-[#55b033]"></i>拼写检查</span>
      <span class="ml-[14px]">兼容模式</span>
      <div class="ml-auto flex h-full items-center text-[#666]">
        <button class="flex w-[26px] justify-center" aria-label="全屏"><svg class="h-[12px] w-[12px]" viewBox="0 0 12 12"><path d="M2.500 2.500h7v7h-7z" fill="#666"/><path d="M.5 3V.5H3M9 .5h2.500V3M11.500 9v2.500H9M3 11.500H.5V9" fill="none" stroke="#666"/></svg></button>
        <button class="ml-[3px] flex h-full w-[21px] items-center justify-center bg-[#c2d0ea]" aria-label="页面视图"><svg class="h-[12px] w-[11px]" viewBox="0 0 11 12"><path d="M0 0h11v12H0z" fill="#666"/><path d="M2 3h7M2 5.500h7M2 8h4" stroke="#dde"/></svg></button>
        <button class="flex w-[33px] justify-center" aria-label="大纲视图"><svg class="h-[12px] w-[11px]" viewBox="0 0 11 12"><path d="M0 0h11v12H0z" fill="#666"/><path d="M2 3h1M4 3h5M2 6h1M4 6h5M2 9h1M4 9h5" stroke="#eee" stroke-width="1.300"/></svg></button>
        <button class="flex w-[21px] justify-center" aria-label="网页视图"><svg class="h-[12px] w-[11px]" viewBox="0 0 11 12"><path d="M0 0h9v5a4 4 0 00-4 7H0z" fill="#666"/><path d="M2 2.500h5" stroke="#eee"/><circle cx="7.500" cy="8.500" r="3" fill="#888" stroke="#666"/></svg></button>
        <button class="ml-[3px] flex w-[20px] justify-center" aria-label="护眼模式"><svg class="h-[12px] w-[11px]" viewBox="0 0 11 12"><path d="M0 0h11v12H0z" fill="#666"/><circle cx="5.500" cy="5" r="2.800" fill="#eee"/><path d="M4.500 7h2v3h-2z" fill="#eee"/></svg></button>
        <svg class="mx-[2px] h-[4px] w-[6px]"><use href="#caret"/></svg>
        <span class="ml-[16px] w-[34px] text-[#444]">90 %</span>
        <button class="mr-[7px] ml-[5px]" aria-label="缩小"><svg class="h-[10px] w-[10px]" viewBox="0 0 10 10"><path d="M0 5h10" stroke="#666" stroke-width="2"/></svg></button>
        <input type="range" min="0" max="100" value="44" aria-label="显示比例" class="h-[16px] w-[134px] appearance-none bg-transparent [&::-webkit-slider-runnable-track]:h-[2px] [&::-webkit-slider-runnable-track]:bg-linear-to-r [&::-webkit-slider-runnable-track]:from-[#5193e1] [&::-webkit-slider-runnable-track]:from-45% [&::-webkit-slider-runnable-track]:to-[#8a8a92] [&::-webkit-slider-runnable-track]:to-45% [&::-webkit-slider-thumb]:mt-[-6px] [&::-webkit-slider-thumb]:h-[14px] [&::-webkit-slider-thumb]:w-[14px] [&::-webkit-slider-thumb]:appearance-none [&::-webkit-slider-thumb]:rounded-full [&::-webkit-slider-thumb]:border [&::-webkit-slider-thumb]:border-[#888] [&::-webkit-slider-thumb]:bg-[#f0f0f0]">
        <button class="mr-[19px] ml-[6px]" aria-label="放大"><svg class="h-[10px] w-[10px]" viewBox="0 0 10 10"><path d="M0 5h10M5 0v10" stroke="#666" stroke-width="2"/></svg></button>
      </div>
    </footer>
  </div>
  </div>

  <!-- Mouse pointer -->
  <svg class="pointer-events-none absolute top-[35px] left-[418px] h-[19px] w-[12px]" viewBox="0 0 12 19"><path d="M.5.800v15.500l3.600-3.500 2.700 5.600 2.300-1-2.700-5.400h5z" fill="#fff" stroke="#223"/></svg>
</div>
</body>
</html>
